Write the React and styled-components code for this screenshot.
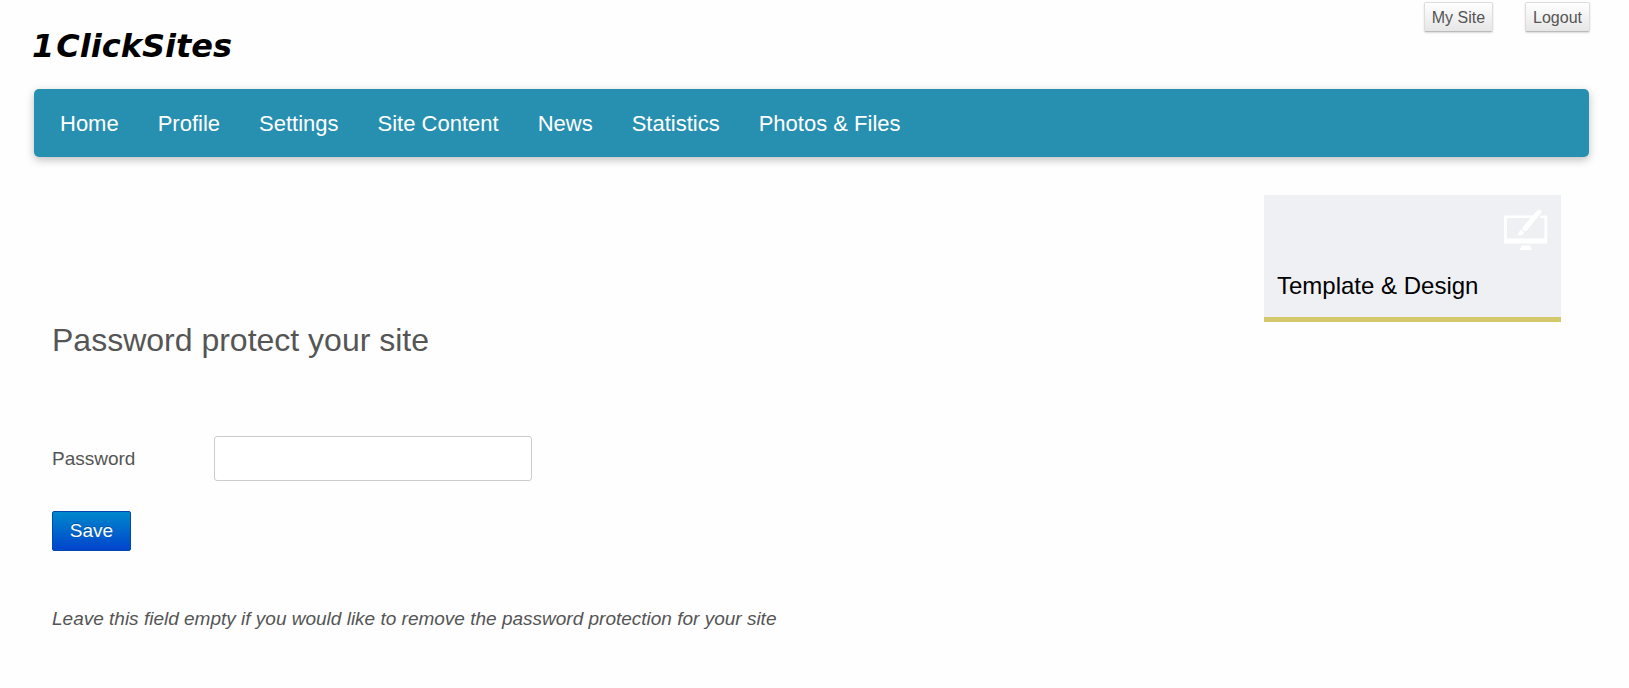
import React from 'react';
import styled, { createGlobalStyle } from 'styled-components';

const menuItems = [
  'Home',
  'Profile',
  'Settings',
  'Site Content',
  'News',
  'Statistics',
  'Photos & Files',
];

function DesignIcon() {
  return (
    <svg width='44' height='42' viewBox='0 0 44 42' aria-hidden='true'>
      <path
        fill='#fff'
        fillRule='evenodd'
        d='M1 6.500H30L27.800 9H3V29.500H40.500V9H35.500L37.600 6.500H42.500L43.200 7.200V34.500H0V7.200ZM17.500 36.500H26L28 41H15.500Z'
      />
      <path
        fill='#fff'
        d='M33.500 1.200C35-.8 38.800 1.500 37.200 4L24.500 19.500C23.300 21.400 21.800 22.400 20.300 22.200L18.300 20.400C18.300 18.800 19 17.600 20.200 16.200ZM17.300 21L19.800 23.300C20 25.800 16.500 26.800 13 26.200C15 25 14.700 21.200 17.300 21Z'
      />
    </svg>
  );
}

function App() {
  const onSubmit = (e) => {
    e.preventDefault();
  };

  return (
    <>
      <GlobalStyle />
      <Header>
        <Logo href='#'>
          <span>1</span>
          <span>ClickSites</span>
        </Logo>
        <HeaderButtons>
          <SmallButton type='button'>My Site</SmallButton>
          <SmallButton type='button'>Logout</SmallButton>
        </HeaderButtons>
      </Header>
      <Nav>
        {menuItems.map((item) => (
          <NavLink key={item} href='#'>
            {item}
          </NavLink>
        ))}
      </Nav>
      <Content>
        <Main>
          <Title>Password protect your site</Title>
          <form onSubmit={onSubmit}>
            <FieldRow>
              <Label htmlFor='password'>Password</Label>
              <Input type='password' id='password' name='password' />
            </FieldRow>
            <SaveButton type='submit'>Save</SaveButton>
          </form>
          <Note>
            Leave this field empty if you would like to remove the password
            protection for your site
          </Note>
        </Main>
        <Tile href='#'>
          <DesignIcon />
          <TileTitle>Template &amp; Design</TileTitle>
        </Tile>
      </Content>
    </>
  );
}

export default App;

const GlobalStyle = createGlobalStyle`
  * {
    box-sizing: border-box;
  }
  body {
    margin: 0;
    background: #fefefe;
    color: #555;
    font-family: 'Liberation Sans', Arial, sans-serif;
    font-size: 19px;
    line-height: 24px;
  }
  a {
    text-decoration: none;
  }
  button,
  input {
    font-family: inherit;
  }
`;

const Header = styled.header`
  display: flex;
  justify-content: space-between;
  align-items: flex-start;
  padding: 2px 39px 21px 32px;
`;

const Logo = styled.a`
  display: flex;
  gap: 2px;
  padding-top: 22px;
  color: #000;
  font-family: 'Segoe Script', 'Lucida Handwriting', 'DejaVu Sans', cursive;
  font-size: 32px;
  font-style: italic;
  font-weight: 700;
  line-height: 44px;
`;

const HeaderButtons = styled.div`
  display: flex;
  gap: 32px;
`;

const SmallButton = styled.button`
  height: 30px;
  padding: 1px 7px 0;
  border: 1px solid #ddd;
  border-bottom-color: #bbb;
  border-radius: 2px;
  background: linear-gradient(#fff, #e6e6e6);
  box-shadow: 0 1px 2px rgba(0, 0, 0, 0.15);
  color: #555;
  font-size: 16px;
  cursor: pointer;
`;

const Nav = styled.nav`
  display: flex;
  align-items: center;
  gap: 39px;
  min-height: 68px;
  margin: 0 40px 0 34px;
  padding: 2px 26px 0;
  border-radius: 5px;
  background: #2790b0;
  box-shadow: 0 3px 8px rgba(0, 0, 0, 0.25);
`;

const NavLink = styled.a`
  color: #fff;
  font-size: 22px;
`;

const Content = styled.div`
  display: flex;
  justify-content: space-between;
  align-items: flex-start;
  padding: 38px 68px 48px 52px;
`;

const Main = styled.main`
  flex: 1;
  padding-top: 125px;
`;

const Title = styled.h1`
  margin: 0 0 76px;
  font-size: 32px;
  font-weight: 400;
  line-height: 40px;
`;

const FieldRow = styled.div`
  display: flex;
  align-items: center;
  margin-bottom: 30px;
`;

const Label = styled.label`
  width: 162px;
`;

const Input = styled.input`
  width: 318px;
  height: 45px;
  padding: 4px 8px;
  border: 1px solid #ccc;
  border-radius: 3px;
  background: #fff;
  color: #555;
  font-size: 19px;
`;

const SaveButton = styled.button`
  width: 79px;
  height: 40px;
  border: 1px solid #0048b0;
  border-radius: 2px;
  background: linear-gradient(#0088cc, #0044cc);
  color: #fff;
  font-size: 19px;
  text-shadow: 0 -1px 0 rgba(0, 0, 0, 0.25);
  cursor: pointer;
`;

const Note = styled.p`
  margin: 56px 0 0;
  font-style: italic;
`;

const Tile = styled.a`
  display: flex;
  flex-direction: column;
  justify-content: space-between;
  width: 297px;
  height: 127px;
  padding: 14px 13px 15px;
  border-bottom: 5px solid #d4c86c;
  background: #eff0f4;
  color: #000;

  svg {
    align-self: flex-end;
  }
`;

const TileTitle = styled.span`
  font-size: 24px;
  line-height: 32px;
`;
